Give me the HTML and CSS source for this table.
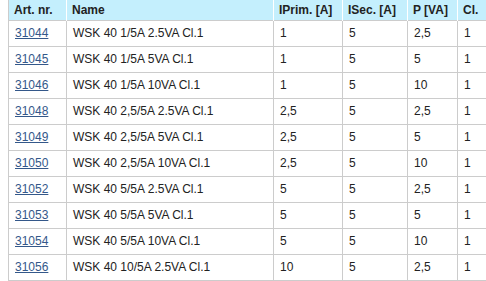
FILE: index.html
```html
<!DOCTYPE html>
<html>
<head>
	<title>WSK 40</title>
	<meta charset="UTF-8">
	<link rel="stylesheet" href="styles.css">
</head>
<body>

<table class="products">
	<colgroup>
		<col class="c-art">
		<col class="c-name">
		<col class="c-prim">
		<col class="c-sec">
		<col class="c-p">
		<col class="c-cl">
	</colgroup>
	<thead>
		<tr>
			<th>Art. nr.</th>
			<th>Name</th>
			<th>IPrim. [A]</th>
			<th>ISec. [A]</th>
			<th>P [VA]</th>
			<th>Cl.</th>
		</tr>
	</thead>
	<tbody>
		<tr><td><a href="#">31044</a></td><td>WSK 40 1/5A 2.5VA Cl.1</td><td>1</td><td>5</td><td>2,5</td><td>1</td></tr>
		<tr><td><a href="#">31045</a></td><td>WSK 40 1/5A 5VA Cl.1</td><td>1</td><td>5</td><td>5</td><td>1</td></tr>
		<tr><td><a href="#">31046</a></td><td>WSK 40 1/5A 10VA Cl.1</td><td>1</td><td>5</td><td>10</td><td>1</td></tr>
		<tr><td><a href="#">31048</a></td><td>WSK 40 2,5/5A 2.5VA Cl.1</td><td>2,5</td><td>5</td><td>2,5</td><td>1</td></tr>
		<tr><td><a href="#">31049</a></td><td>WSK 40 2,5/5A 5VA Cl.1</td><td>2,5</td><td>5</td><td>5</td><td>1</td></tr>
		<tr><td><a href="#">31050</a></td><td>WSK 40 2,5/5A 10VA Cl.1</td><td>2,5</td><td>5</td><td>10</td><td>1</td></tr>
		<tr><td><a href="#">31052</a></td><td>WSK 40 5/5A 2.5VA Cl.1</td><td>5</td><td>5</td><td>2,5</td><td>1</td></tr>
		<tr><td><a href="#">31053</a></td><td>WSK 40 5/5A 5VA Cl.1</td><td>5</td><td>5</td><td>5</td><td>1</td></tr>
		<tr><td><a href="#">31054</a></td><td>WSK 40 5/5A 10VA Cl.1</td><td>5</td><td>5</td><td>10</td><td>1</td></tr>
		<tr><td><a href="#">31056</a></td><td>WSK 40 10/5A 2.5VA Cl.1</td><td>10</td><td>5</td><td>2,5</td><td>1</td></tr>
	</tbody>
</table>

</body>
</html>
```

FILE: styles.css
```css
body
{
	margin:0 0 0 8px;
	background:white;
	font-family:"Liberation Sans", Arial, sans-serif;
	font-size:12px;
	color:#222;
}
.products
{
	border-collapse:collapse;
	table-layout:fixed;
	width:478px;
}
.c-art { width:58px; }
.c-name { width:207px; }
.c-prim { width:69px; }
.c-sec { width:65px; }
.c-p { width:50px; }
.c-cl { width:29px; }
th
{
	background:#c4effd;
	color:#222;
	font-weight:bold;
	text-align:left;
	height:20px;
	padding:0 5px;
	border-left:1px solid #fff;
	box-sizing:border-box;
}
th:first-child
{
	border-left:1px solid #ccc;
}
td
{
	height:26px;
	padding:0 6px;
	border:1px solid #ccc;
	box-sizing:border-box;
}
a
{
	color:#34588a;
}
```
